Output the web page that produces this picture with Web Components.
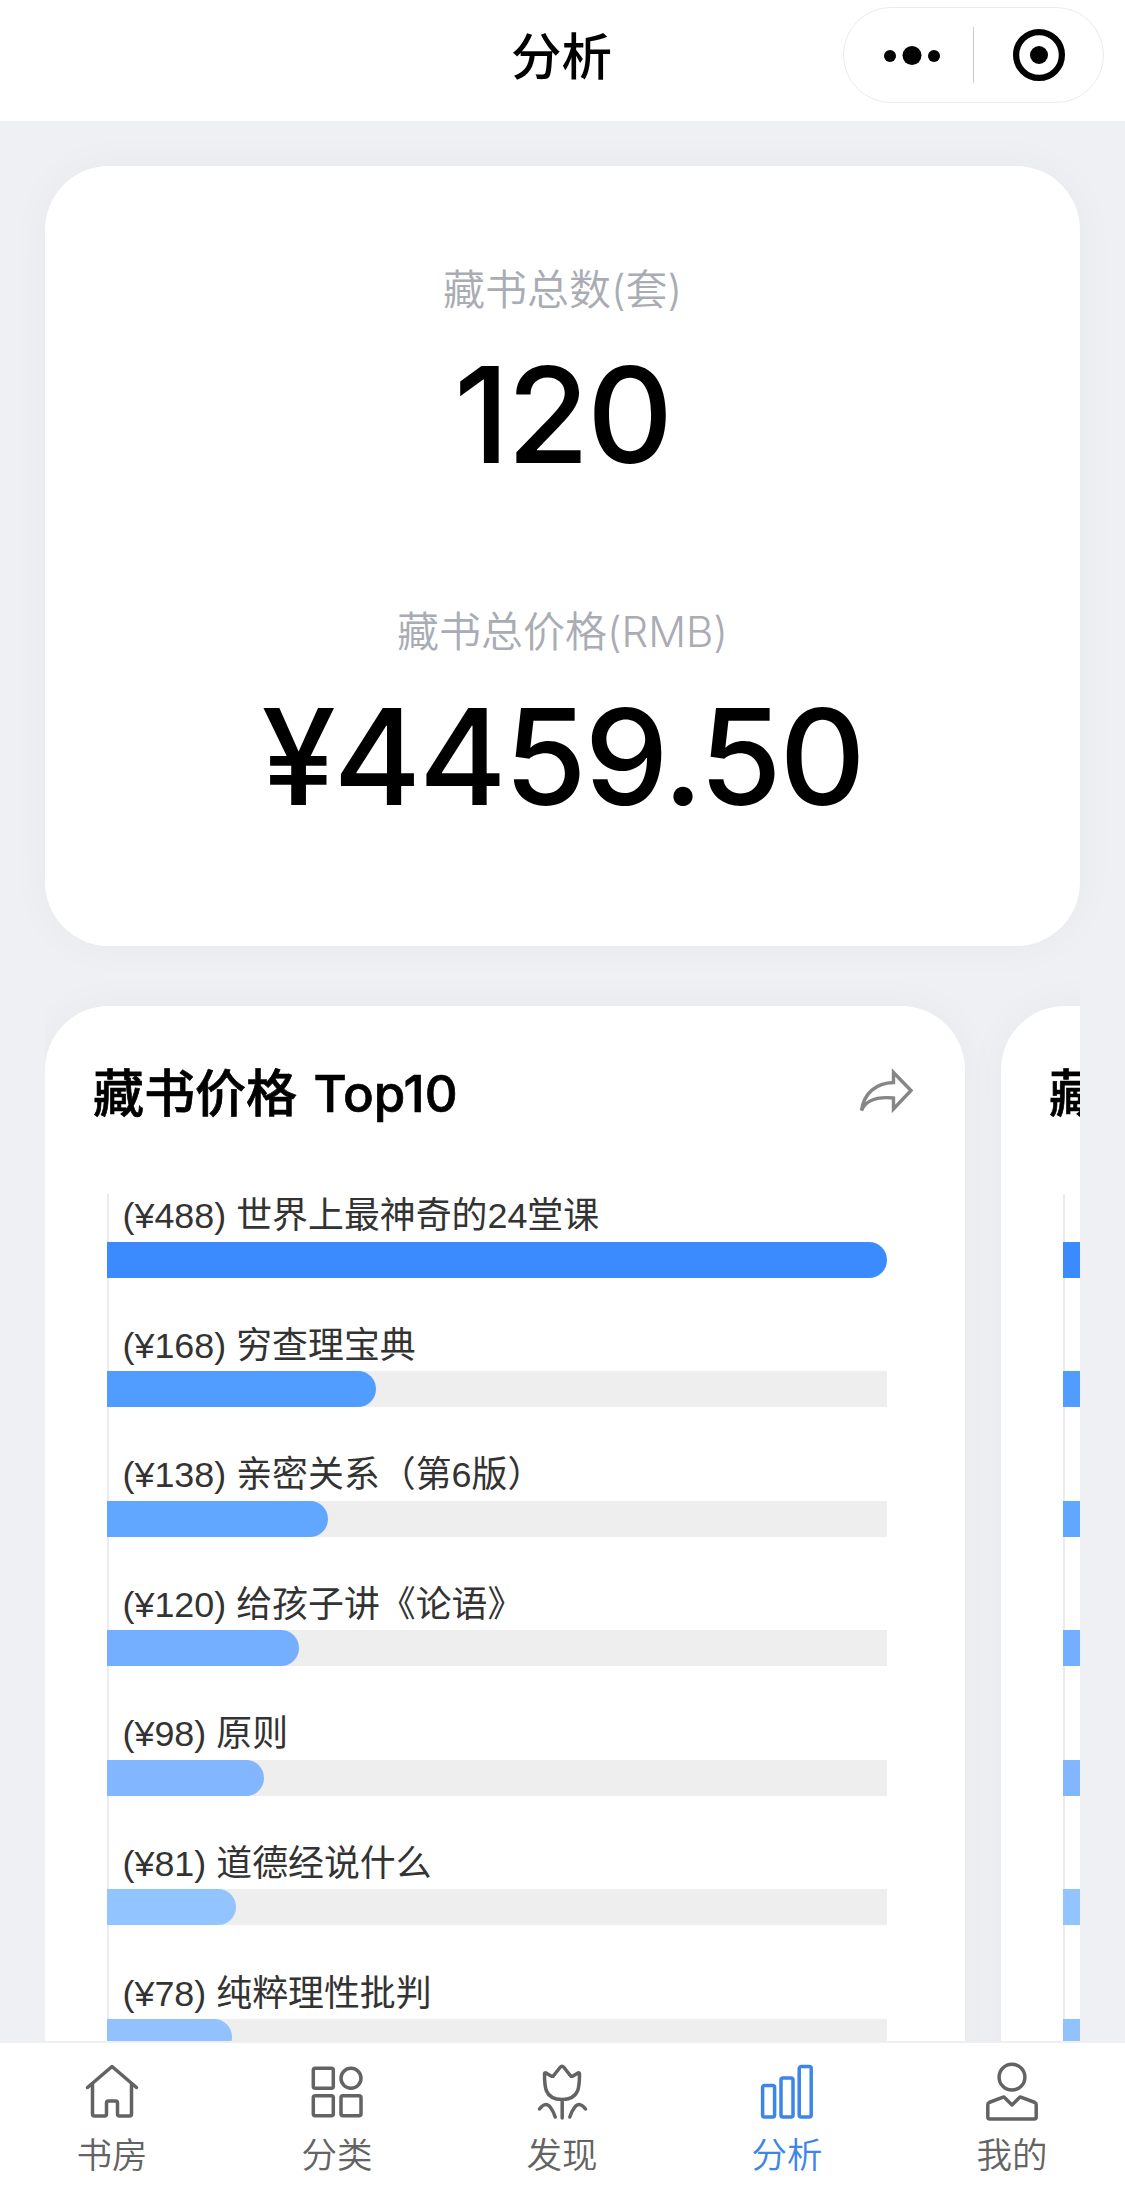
<!DOCTYPE html>
<html lang="zh-CN">
<head>
<meta charset="utf-8">
<meta name="viewport" content="width=device-width, initial-scale=1">
<title>分析</title>
<style>
  html, body {
    margin: 0;
    height: 100%;
  }
  body {
    font-family: "Liberation Sans", "Noto Sans CJK SC", sans-serif;
    color: #000;
    background: #eff0f4;
    overflow: hidden;
  }
</style>
</head>
<body>

<analysis-page></analysis-page>

<script>

/**
 * NavHeader
 *  - page title with the mini program capsule on the right
 */
class NavHeader extends HTMLElement {

  constructor() {
    super();
    const shadowRoot = this.attachShadow({mode: 'open'});
    shadowRoot.innerHTML = `
      <style>
        :host{
          display: grid;
          grid-template-columns: 1fr auto 1fr;
          align-items: start;
          box-sizing: border-box;
          height: 121px;
          padding: 7px 21px 0 19px;
          background: #fff;
        }
        .title{
          grid-column: 2;
          padding-top: 3px;
          font-size: 50.5px;
          font-weight: 500;
          line-height: 96px;
        }
        .capsule{
          justify-self: end;
          box-sizing: border-box;
          width: 261px;
          height: 96px;
          border: 1px solid #ebebeb;
          border-radius: 48px;
        }
        svg{
          display: block;
          margin: -1px;
        }
      </style>
      <div class="title"><slot></slot></div>
      <div class="capsule">
        <svg width="261" height="96" viewBox="0 0 261 96">
          <circle cx="47" cy="49" r="6"/>
          <circle cx="69" cy="48.5" r="9.5"/>
          <circle cx="91" cy="49" r="6"/>
          <path d="M130.5 20v56" stroke="#ccc" stroke-width="1"/>
          <circle cx="196" cy="48" r="22.9" fill="none" stroke="#000" stroke-width="6.2"/>
          <circle cx="196" cy="48" r="9"/>
        </svg>
      </div>
    `;
  }

}

customElements.define('nav-header', NavHeader);

/**
 * SummaryStat
 *  - small caption over one large number
 */
class SummaryStat extends HTMLElement {

  constructor() {
    super();
    const shadowRoot = this.attachShadow({mode: 'open'});
    shadowRoot.innerHTML = `
      <style>
        :host{
          display: flex;
          flex-direction: column;
          align-items: center;
        }
        .label{
          font-family: Inter, "Noto Sans CJK SC", sans-serif;
          font-size: 42px;
          font-weight: 350;
          line-height: 60px;
          color: #a9acb4;
        }
        .value{
          margin-top: 15px;
          font-family: Inter, "Liberation Sans", sans-serif;
          font-size: 133.5px;
          font-weight: 500;
          line-height: 160px;
          letter-spacing: -2.3px;
        }
      </style>
      <div class="label">${ this.getAttribute('label') }</div>
      <div class="value"><slot></slot></div>
    `;
  }

}

customElements.define('summary-stat', SummaryStat);

/**
 * SummaryCard
 */
class SummaryCard extends HTMLElement {

  constructor() {
    super();
    const shadowRoot = this.attachShadow({mode: 'open'});
    shadowRoot.innerHTML = `
      <style>
        :host{
          display: flex;
          flex-direction: column;
          gap: 107px;
          box-sizing: border-box;
          height: 780px;
          padding-top: 94px;
          border-radius: 64px;
          background: #fff;
          box-shadow: 0 0 44px rgba(60, 60, 40, 0.035);
        }
      </style>
      <slot></slot>
    `;
  }

}

customElements.define('summary-card', SummaryCard);

/**
 * RankBar
 *  - one row of the chart: label above a track with its filled part
 */
class RankBar extends HTMLElement {

  constructor() {
    super();
    const ratio = Number(this.getAttribute('value')) / Number(this.getAttribute('max'));
    const shadowRoot = this.attachShadow({mode: 'open'});
    shadowRoot.innerHTML = `
      <style>
        :host{
          display: block;
          height: 129.6px;
        }
        .label{
          height: 47.5px;
          padding-left: 15.5px;
          font-size: 35.9px;
          line-height: 44px;
          white-space: nowrap;
          color: #333;
        }
        .track{
          height: 36px;
          background: ${ ratio < 1 ? '#eee' : 'none' };
        }
        .fill{
          width: ${ ratio * 100 }%;
          height: 100%;
          border-radius: 0 18px 18px 0;
          background: ${ this.getAttribute('color') };
        }
      </style>
      <div class="label"><slot></slot></div>
      <div class="track"><div class="fill"></div></div>
    `;
  }

}

customElements.define('rank-bar', RankBar);

/**
 * RankCard
 *  - titled card with a share icon and the rows of the chart
 */
class RankCard extends HTMLElement {

  constructor() {
    super();
    const shadowRoot = this.attachShadow({mode: 'open'});
    shadowRoot.innerHTML = `
      <style>
        :host{
          display: block;
          flex: none;
          box-sizing: border-box;
          width: 920px;
          height: 1500px;
          padding: 48px 51px 0 48px;
          border-radius: 64px;
          background: #fff;
          box-shadow: 0 0 44px rgba(60, 60, 40, 0.035);
        }
        .header{
          display: flex;
          justify-content: space-between;
          align-items: center;
          height: 76px;
        }
        .title{
          padding-top: 3px;
          font-family: Inter, "Noto Sans CJK SC", sans-serif;
          font-size: 51px;
          font-weight: 550;
          line-height: 76px;
          word-spacing: 3px;
          white-space: nowrap;
          -webkit-text-stroke: 0.7px #000;
        }
        .chart{
          width: 780px;
          margin: 64px 0 0 14px;
          background: linear-gradient(#e9ebf1, #e9ebf1) 0 0 / 2px 100% no-repeat;
        }
      </style>
      <div class="header">
        <div class="title">${ this.getAttribute('label') }</div>
        <svg width="56" height="50" viewBox="0 0 56 50" fill="none" stroke="#868686" stroke-width="3.4">
          <path d="M35.5 5.5 53 23.5 35.5 42v-11C20 29.5 8 32.5 3.5 43.5 6 26 18 16 35.5 15.5z"/>
        </svg>
      </div>
      <div class="chart"><slot></slot></div>
    `;
  }

}

customElements.define('rank-card', RankCard);

/**
 * TabItem
 */
class TabItem extends HTMLElement {

  static icons = {
    home: '<path d="M5.5 27.5 30 6.5l24.5 21M10.500 24v30q0 2 2 2h10q2 0 2-2V43q0-2 2-2h7q2 0 2 2v11q0 2 2 2h10q2 0 2-2V24"/>',
    category: '<rect x="6.3" y="8.3" width="20" height="20" rx="2"/><circle cx="44" cy="18.3" r="10"/><rect x="6.3" y="35.8" width="20" height="20" rx="2"/><rect x="34" y="35.8" width="20" height="20" rx="2"/>',
    discover: '<path d="M14 13q-1.500-.500-1.500 1 0 12 2 17c2.500 6 8 8.500 15.500 8.500s13-2.500 15.500-8.500q2-5 2-17 0-1.500-1.500-1l-5 3q-2 1-3.500-1.500l-5.500-7q-2-2.500-4 0l-5.500 7q-1.500 2.500-3.500 1.500zM30.200 40v18M7.500 49q6-8 11-1.500 3 4 4.700 9.500M53.500 49q-6-8-11-1.500-3 4-4.700 9.500"/>',
    chart: '<rect x="5.6" y="25.6" width="12" height="31.4" rx="2"/><rect x="24" y="18" width="12" height="39" rx="2"/><rect x="42.2" y="6.6" width="12" height="50.4" rx="2"/>',
    mine: '<circle cx="30" cy="17.2" r="12.9"/><path d="m30 45-7.500-7.500q-.700-.700-2-.200L7 42.500q-1.200.500-1.200 2V57q0 2 2 2h44.400q2 0 2-2V44.500q0-1.500-1.200-2L39.500 37.300q-1.300-.500-2 .200z"/>'
  };

  constructor() {
    super();
    const shadowRoot = this.attachShadow({mode: 'open'});
    shadowRoot.innerHTML = `
      <style>
        :host{
          display: flex;
          flex: 1;
          flex-direction: column;
          align-items: center;
          color: #636363;
        }
        :host([active]){
          color: #3d85e6;
        }
        svg{
          width: 60px;
          height: 62px;
          margin-right: 2px;
        }
        .label{
          margin-top: 5px;
          margin-right: 1px;
          font-family: "Noto Sans CJK SC", sans-serif;
          font-size: 35.5px;
          font-weight: 350;
          line-height: 52px;
        }
      </style>
      <svg viewBox="0 0 60 62" fill="none" stroke="currentColor" stroke-width="3.5" stroke-linecap="round" stroke-linejoin="round">
        ${ TabItem.icons[this.getAttribute('icon')] }
      </svg>
      <div class="label"><slot></slot></div>
    `;
  }

}

customElements.define('tab-item', TabItem);

/**
 * TabBar
 */
class TabBar extends HTMLElement {

  constructor() {
    super();
    const shadowRoot = this.attachShadow({mode: 'open'});
    shadowRoot.innerHTML = `
      <style>
        :host{
          display: flex;
          box-sizing: border-box;
          height: 162px;
          padding-top: 17px;
          border-top: 2px solid #efeff0;
          background: #fff;
        }
      </style>
      <slot></slot>
    `;
  }

}

customElements.define('tab-bar', TabBar);

class AnalysisPage extends HTMLElement {

  static colors = ['#3c8bfe', '#519cff', '#62a7ff', '#74aefe', '#82b7ff', '#92c4ff', '#92c2fe'];

  static books = [
    {price: 488, name: '世界上最神奇的24堂课'},
    {price: 168, name: '穷查理宝典'},
    {price: 138, name: '亲密关系（第6版）'},
    {price: 120, name: '给孩子讲《论语》'},
    {price: 98, name: '原则'},
    {price: 81, name: '道德经说什么'},
    {price: 78, name: '纯粹理性批判'}
  ];

  constructor() {
    super();

    const max = AnalysisPage.books[0].price;
    const bars = AnalysisPage.books.map(({price, name}, idx) => {
      return `<rank-bar value="${ price }" max="${ max }" color="${ AnalysisPage.colors[idx] }">(¥${ price }) ${ name }</rank-bar>`;
    }).join('');
    const nextBars = AnalysisPage.colors.map(color => {
      return `<rank-bar value="1" max="1" color="${ color }"></rank-bar>`;
    }).join('');

    const shadowRoot = this.attachShadow({mode: 'open'});
    shadowRoot.innerHTML = `
      <style>
        :host{
          display: flex;
          flex-direction: column;
          height: 100vh;
        }
        main{
          flex: 1;
          min-height: 0;
          padding: 45px 45px 0 45px;
          overflow: hidden;
        }
        .cards{
          display: flex;
          gap: 36px;
          padding-top: 60px;
          overflow: hidden;
        }
      </style>
      <nav-header>分析</nav-header>
      <main>
        <summary-card>
          <summary-stat label="藏书总数(套)">120</summary-stat>
          <summary-stat label="藏书总价格(RMB)">¥4459.50</summary-stat>
        </summary-card>
        <div class="cards">
          <rank-card label="藏书价格 Top10">${ bars }</rank-card>
          <rank-card label="藏">${ nextBars }</rank-card>
        </div>
      </main>
      <tab-bar>
        <tab-item icon="home">书房</tab-item>
        <tab-item icon="category">分类</tab-item>
        <tab-item icon="discover">发现</tab-item>
        <tab-item icon="chart" active>分析</tab-item>
        <tab-item icon="mine">我的</tab-item>
      </tab-bar>
    `;
  }

}

customElements.define('analysis-page', AnalysisPage);

</script>
</body>
</html>
